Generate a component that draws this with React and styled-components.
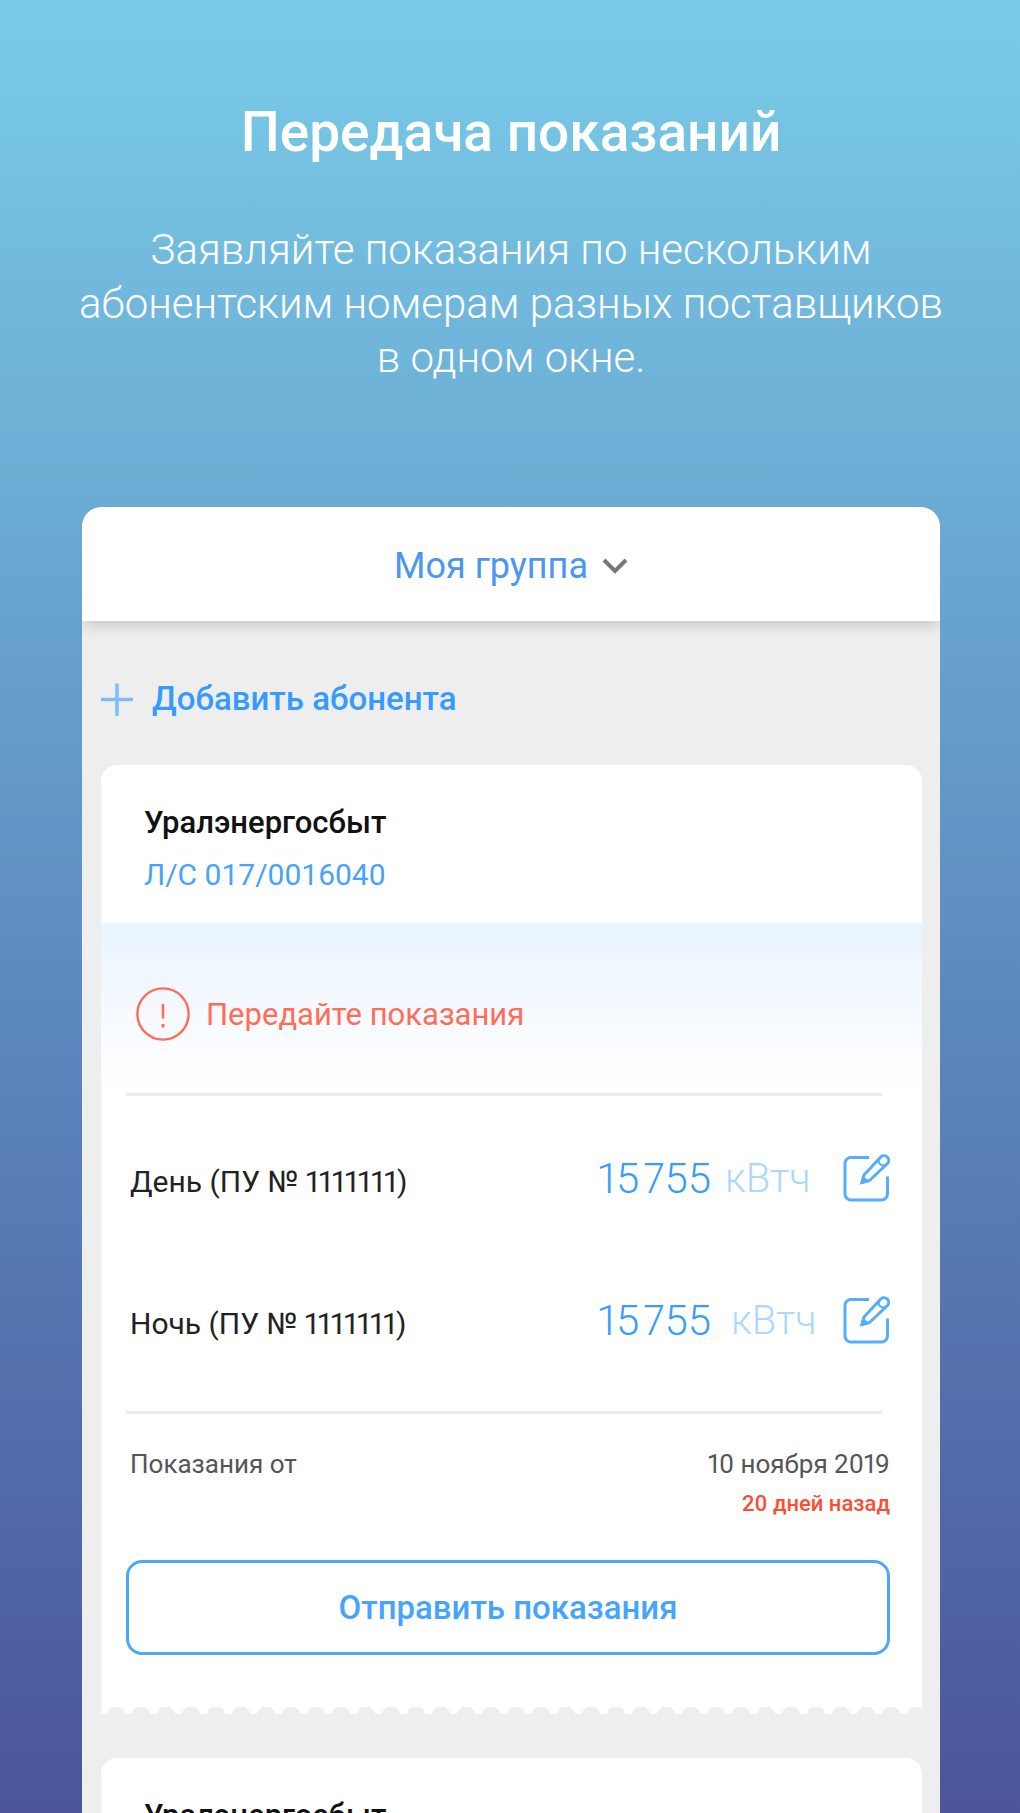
import React from "react";
import styled, { createGlobalStyle } from "styled-components";

export default function App() {
  const readings = [
    { label: "День (ПУ № 1111111)", value: "15\u200a755", unit: "кВтч", gap: 14 },
    { label: "Ночь (ПУ № 1111111)", value: "15\u200a755", unit: "кВтч", gap: 20 },
  ];
  return (
    <Page>
      <GlobalStyle />
      <Intro>
        <h1>Передача показаний</h1>
        <p>
          Заявляйте показания по нескольким абонентским номерам разных
          поставщиков в&nbsp;одном&nbsp;окне.
        </p>
      </Intro>
      <Panel>
        <PanelHeader>
          <GroupSelect aria-label="Моя группа">
            <option>Моя группа</option>
          </GroupSelect>
          <ChevronIcon />
        </PanelHeader>
        <PanelBody>
          <AddButton type="button">
            <PlusIcon />
            Добавить абонента
          </AddButton>
          <div>
            <CardHead>
              <h2>Уралэнергосбыт</h2>
              <a href="#account">Л/С 017/0016040</a>
            </CardHead>
            <Notice>
              <AlertIcon />
              Передайте показания
            </Notice>
            <CardBody>
              <Divider />
              <Readings>
                {readings.map((data, index) => {
                  return (
                    <Reading key={index} $gap={data.gap}>
                      <span className="label">{data.label}</span>
                      <span className="value">{data.value}</span>
                      <span className="unit">{data.unit}</span>
                      <EditButton type="button" aria-label={data.label}>
                        <EditIcon />
                      </EditButton>
                    </Reading>
                  );
                })}
              </Readings>
              <Divider />
              <Dates>
                <span>Показания от</span>
                <div>
                  <span>10 ноября 2019</span>
                  <strong>20 дней назад</strong>
                </div>
              </Dates>
              <SubmitButton type="button">Отправить показания</SubmitButton>
            </CardBody>
            <TornEdge />
          </div>
          <CardHead>
            <h2>Уралэнергосбыт</h2>
            <a href="#account">Л/С 017/0016040</a>
          </CardHead>
        </PanelBody>
      </Panel>
    </Page>
  );
}

function ChevronIcon() {
  return (
    <svg width="26" height="18" viewBox="0 0 26 18" fill="none" aria-hidden="true">
      <path d="M2 3L13 14L24 3" stroke="#777777" strokeWidth="4" />
    </svg>
  );
}

function PlusIcon() {
  return (
    <svg width="33" height="33" viewBox="0 0 33 33" fill="none" aria-hidden="true">
      <path d="M16 0.5V33M0 16.5H32" stroke="#7dbdfa" strokeWidth="3.5" />
    </svg>
  );
}

function AlertIcon() {
  return (
    <svg width="54" height="54" viewBox="0 0 54 54" fill="none" aria-hidden="true">
      <circle cx="27" cy="27" r="25.6" stroke="#ff6d57" strokeWidth="2.4" />
      <path d="M27 17V31.5" stroke="#ff6d57" strokeWidth="2.6" />
      <path d="M27 37V40.5" stroke="#ff6d57" strokeWidth="3" />
    </svg>
  );
}

function EditIcon() {
  return (
    <svg width="48" height="50" viewBox="0 0 48 50" fill="none" aria-hidden="true">
      <g stroke="#55adfc" strokeWidth="3">
        <path d="M27 4.500H9A6 6 0 0 0 3 10.500V41A6 6 0 0 0 9 47H39.500A6 6 0 0 0 45.500 41V23.500" />
        <path
          d="M20 29.500L22 22L38.500 4.200A4.500 4.500 0 0 1 45.500 10.500L27.500 27.500Z"
          strokeLinejoin="round"
        />
        <path d="M37.500 5.500A4.500 4.500 0 0 0 44 11.500" strokeWidth="2" />
        <path d="M20 29.500L21.500 25L24.500 28Z" />
      </g>
    </svg>
  );
}

const GlobalStyle = createGlobalStyle`
  * {
    box-sizing: border-box;
  }
  body {
    margin: 0;
  }
  h1, h2, p {
    margin: 0;
  }
  body, button, select {
    font-family: Roboto, "Liberation Sans", sans-serif;
  }
`;

const Page = styled.main`
  display: flex;
  flex-direction: column;
  height: 100vh;
  overflow: hidden;
  padding: 0 80px 0 82px;
  background: linear-gradient(#79cce9 0%, #6aa8d1 30%, #5a83b9 60%, #4b5598 100%);
`;

const Intro = styled.header`
  flex: none;
  padding: 96px 0 122px;
  color: white;
  text-align: center;
  h1 {
    margin-bottom: 55px;
    font-size: 55px;
    font-weight: 500;
    line-height: 72px;
  }
  p {
    margin: 0 -40px;
    font-size: 42px;
    font-weight: 300;
    line-height: 54px;
  }
`;

const Panel = styled.section`
  flex: none;
  overflow: hidden;
  border-radius: 20px 20px 0 0;
  background-color: #eeeeee;
`;

const PanelHeader = styled.div`
  display: flex;
  align-items: center;
  justify-content: center;
  gap: 14px;
  height: 114px;
  padding-top: 4px;
  background-color: white;
  box-shadow: 0 8px 12px -2px rgba(0, 0, 0, 0.14);
`;

const GroupSelect = styled.select`
  appearance: none;
  border: none;
  padding: 0;
  background: none;
  color: #4b96f0;
  font-size: 36px;
  line-height: 48px;
`;

const PanelBody = styled.div`
  display: flex;
  flex-direction: column;
  gap: 44px;
  padding: 56px 18px 0 19px;
`;

const AddButton = styled.button`
  display: flex;
  align-items: center;
  align-self: flex-start;
  gap: 18px;
  border: none;
  padding: 0;
  background: none;
  color: #369bfc;
  font-size: 33px;
  font-weight: 500;
  line-height: 44px;
`;

const CardHead = styled.div`
  padding: 34px 43px 20px;
  border-radius: 16px 16px 0 0;
  background-color: white;
  h2 {
    color: #111111;
    font-size: 31px;
    font-weight: 500;
    line-height: 48px;
  }
  a {
    display: block;
    color: #47a3fc;
    font-size: 30px;
    line-height: 56px;
    text-decoration: none;
  }
`;

const Notice = styled.div`
  display: flex;
  align-items: center;
  gap: 16px;
  height: 170px;
  padding: 12px 35px 0;
  background: linear-gradient(#e9f4fe, #f3f8ff 40%, #ffffff);
  color: #ff6d57;
  font-size: 31px;
`;

const CardBody = styled.div`
  padding: 0 32px 52px 25px;
  background-color: white;
`;

const Divider = styled.hr`
  height: 3px;
  margin: 0 8px 0 0;
  border: none;
  background-color: #ebebed;
`;

const Readings = styled.div`
  padding: 11px 0 20px;
`;

const Reading = styled.div`
  display: flex;
  align-items: center;
  height: 142px;
  padding-left: 4px;
  font-variant-numeric: proportional-nums;
  .label {
    flex: 1;
    padding-top: 6px;
    color: #222222;
    font-size: 30px;
  }
  .value {
    color: #389cfc;
    font-size: 42px;
    font-weight: 300;
  }
  .unit {
    width: 131px;
    padding-left: ${({ $gap }) => $gap}px;
    color: #add7fe;
    font-size: 40px;
    font-weight: 300;
  }
`;

const EditButton = styled.button`
  display: flex;
  border: none;
  padding: 0;
  background: none;
`;

const Dates = styled.div`
  display: flex;
  justify-content: space-between;
  padding: 30px 0 36px 4px;
  color: #555555;
  font-size: 26px;
  font-variant-numeric: proportional-nums;
  line-height: 40px;
  div {
    display: flex;
    flex-direction: column;
    align-items: flex-end;
  }
  strong {
    color: #ff4d33;
    font-size: 22px;
    font-weight: 500;
  }
`;

const SubmitButton = styled.button`
  display: block;
  width: 100%;
  height: 95px;
  border: 3px solid #4da8fc;
  border-radius: 16px;
  background-color: white;
  color: #46a4fc;
  font-size: 33px;
  font-weight: 500;
`;

const TornEdge = styled.div`
  height: 7px;
  background: radial-gradient(circle at 12px 9px, #eeeeee 9px, #ffffff 10px) 3px 0 / 25px 8px repeat-x;
`;
